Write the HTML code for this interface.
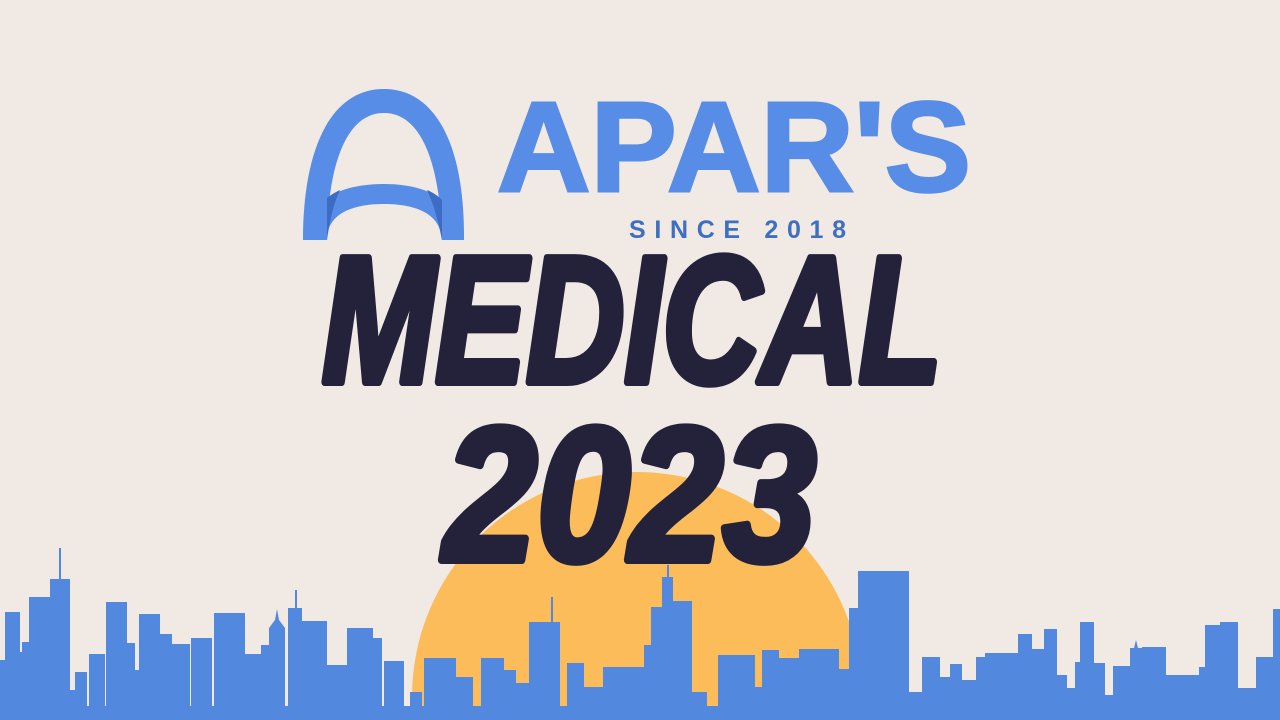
<!DOCTYPE html>
<html><head><meta charset="utf-8"><style>
html,body{margin:0;padding:0;background:#f1e9e3;width:1280px;height:720px;overflow:hidden;}
svg{display:block}
</style></head><body>
<svg width="1280" height="720" viewBox="0 0 1280 720" xmlns="http://www.w3.org/2000/svg">
<rect width="1280" height="720" fill="#f1e9e3"/>
<circle cx="637" cy="697" r="225" fill="#fcbc5a"/>
<path d="M303 240 C303 150 330 89 384 89 C438 89 465 150 464 240 L442 240 C440 160 420 113 384 113 C348 113 328 160 327 240 Z" fill="#578de6"/>
<path d="M327 240 C327 215 350 204 384 204 C418 204 441 215 442 240 L442 200 C430 190 410 184 384 184 C358 184 338 190 327 198 Z" fill="#578de6"/>
<path d="M327 198 C332 194 336 192 340 190 C333 205 330 220 327 240 Z M442 200 C437 195 432 192 427 190 C434 205 438 220 442 240 Z" fill="#3c6cc4"/>
<text x="497" y="191" font-family="Liberation Sans, sans-serif" font-weight="bold" font-size="128" fill="#578de6" stroke="#578de6" stroke-width="3" textLength="474" lengthAdjust="spacingAndGlyphs">APAR'S</text>
<text x="629" y="238" font-family="Liberation Sans, sans-serif" font-weight="bold" font-size="25" fill="#3f6fc2" textLength="217" lengthAdjust="spacing">SINCE 2018</text>
<text x="322" y="382" font-family="Liberation Sans, sans-serif" font-weight="bold" font-style="italic" font-size="180" fill="#23223a" stroke="#23223a" stroke-width="8" stroke-linejoin="round" textLength="620" lengthAdjust="spacingAndGlyphs">MEDICAL</text>
<text x="444" y="560" font-family="Liberation Sans, sans-serif" font-weight="bold" font-style="italic" font-size="190" fill="#23223a" stroke="#23223a" stroke-width="8" stroke-linejoin="round" textLength="372" lengthAdjust="spacingAndGlyphs">2023</text>
<g fill="#5288de">
<rect x="0" y="706" width="1280" height="14"/>
<rect x="0" y="660" width="5" height="60"/><rect x="5" y="612" width="15" height="108"/><rect x="20" y="652" width="2" height="68"/><rect x="22" y="642" width="7" height="78"/><rect x="29" y="597" width="21" height="123"/><rect x="50" y="579" width="20" height="141"/><rect x="59" y="548" width="2" height="40"/><rect x="70" y="690" width="5" height="30"/><rect x="75" y="672" width="12" height="48"/><rect x="89" y="654" width="16" height="66"/><rect x="106" y="602" width="21" height="118"/><rect x="127" y="643" width="8" height="77"/><rect x="135" y="670" width="4" height="50"/><rect x="139" y="614" width="21" height="106"/><rect x="160" y="634" width="12" height="86"/><rect x="172" y="644" width="18" height="76"/><rect x="191" y="638" width="21" height="82"/><rect x="214" y="613" width="31" height="107"/><rect x="245" y="654" width="16" height="66"/><rect x="261" y="645" width="8" height="75"/><path d="M269 720 L269 628 L275 620 L277 609 L279 620 L285 628 L285 720Z"/><rect x="288" y="608" width="14" height="112"/><rect x="295" y="590" width="2" height="20"/><rect x="302" y="621" width="25" height="99"/><rect x="327" y="665" width="20" height="55"/><rect x="347" y="628" width="26" height="92"/><rect x="373" y="638" width="9" height="82"/><rect x="384" y="661" width="20" height="59"/><rect x="404" y="708" width="6" height="12"/><rect x="410" y="692" width="12" height="28"/><rect x="424" y="658" width="32" height="62"/><rect x="456" y="677" width="17" height="43"/><rect x="473" y="706" width="8" height="14"/><rect x="481" y="658" width="23" height="62"/><rect x="504" y="670" width="12" height="50"/><rect x="516" y="683" width="13" height="37"/><rect x="529" y="622" width="31" height="98"/><rect x="551" y="597" width="2" height="27"/><rect x="560" y="713" width="7" height="7"/><rect x="567" y="663" width="17" height="57"/><rect x="584" y="687" width="19" height="33"/><rect x="603" y="667" width="41" height="53"/><rect x="644" y="645" width="7" height="75"/><rect x="651" y="607" width="11" height="113"/><rect x="662" y="577" width="11" height="143"/><rect x="667" y="565" width="2" height="14"/><rect x="673" y="601" width="19" height="119"/><rect x="692" y="692" width="15" height="28"/><rect x="707" y="712" width="11" height="8"/><rect x="718" y="655" width="37" height="65"/><rect x="755" y="687" width="7" height="33"/><rect x="762" y="650" width="17" height="70"/><rect x="779" y="658" width="20" height="62"/><rect x="799" y="649" width="40" height="71"/><rect x="839" y="669" width="10" height="51"/><rect x="849" y="608" width="9" height="112"/><rect x="858" y="571" width="51" height="149"/><rect x="909" y="692" width="13" height="28"/><rect x="922" y="657" width="18" height="63"/><rect x="940" y="677" width="10" height="43"/><rect x="950" y="664" width="12" height="56"/><rect x="962" y="680" width="14" height="40"/><rect x="976" y="657" width="9" height="63"/><rect x="985" y="653" width="33" height="67"/><rect x="1018" y="634" width="14" height="86"/><rect x="1032" y="649" width="12" height="71"/><rect x="1044" y="629" width="13" height="91"/><rect x="1057" y="675" width="10" height="45"/><rect x="1067" y="688" width="8" height="32"/><rect x="1075" y="662" width="5" height="58"/><rect x="1080" y="622" width="14" height="98"/><rect x="1094" y="663" width="11" height="57"/><rect x="1105" y="695" width="8" height="25"/><rect x="1113" y="666" width="17" height="54"/><path d="M1130 720 L1130 648 L1134 648 L1136 640 L1138 648 L1142 648 L1142 720Z"/><rect x="1142" y="647" width="24" height="73"/><rect x="1166" y="675" width="33" height="45"/><rect x="1199" y="667" width="6" height="53"/><rect x="1205" y="625" width="15" height="95"/><rect x="1220" y="622" width="18" height="98"/><rect x="1238" y="688" width="18" height="32"/><rect x="1256" y="657" width="17" height="63"/><rect x="1273" y="609" width="7" height="111"/>
</g>
</svg>
</body></html>
